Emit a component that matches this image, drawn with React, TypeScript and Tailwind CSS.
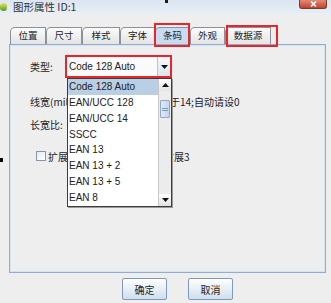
import React from 'react';

const tabs = [
  { label: '位置', w: 36 },
  { label: '尺寸', w: 36 },
  { label: '样式', w: 38 },
  { label: '字体', w: 35 },
  { label: '条码', w: 35, active: true },
  { label: '外观', w: 35 },
  { label: '数据源', w: 46 },
];

const items = ['Code 128 Auto', 'EAN/UCC 128', 'EAN/UCC 14', 'SSCC', 'EAN 13', 'EAN 13 + 2', 'EAN 13 + 5', 'EAN 8'];

const cjk = { fontFamily: '"Noto Sans CJK SC", "Liberation Sans", sans-serif' };
const latin = { fontFamily: '"Liberation Sans", Arial, sans-serif' };

const DownArrow = () => (
  <svg width="7" height="4" viewBox="0 0 7 4">
    <path d="M0 0h7L3.5 4z" fill="#111" />
  </svg>
);

const UpArrow = () => (
  <svg width="7" height="4" viewBox="0 0 7 4">
    <path d="M0 4h7L3.5 0z" fill="#111" />
  </svg>
);

export default function App() {
  return (
    <div className="relative w-[331px] h-[303px] overflow-hidden bg-[#eeeeee] text-[#222]" style={cjk}>
      {/* title bar */}
      <div className="flex items-center h-[14px] bg-gradient-to-b from-[#dbe6f2] to-[#e8eef5]">
        <div className="w-[7px] h-[8px] rounded-full bg-gradient-to-b from-[#e6e84a] to-[#4a9a2a]" />
        <span className="ml-[6px] text-[10.5px] leading-none text-[#333]">图形属性 ID:1</span>
        <div className="ml-auto mr-[4px] self-start flex items-center justify-center w-[28px] h-[9px] rounded-b-[3px] border border-t-0 border-[#7a3a30] bg-gradient-to-b from-[#e08a78] to-[#c2402a]">
          <svg width="7" height="6" viewBox="0 0 7 6">
            <path d="M1 0.5L6 5.5M6 0.5L1 5.5" stroke="white" strokeWidth="1.6" />
          </svg>
        </div>
      </div>

      {/* tabs */}
      <div className="flex items-end h-[17px] mt-[13px] pl-[10px]">
        {tabs.map((t) => (
          <div
            key={t.label}
            style={{ width: t.w }}
            className={`h-[17px] flex items-center justify-center border border-b-0 border-[#8c9098] rounded-tl-[5px] text-[9.5px] leading-none ${
              t.active ? 'bg-[#c7dcf0]' : 'bg-gradient-to-b from-[#fbfbfb] to-[#e4e4e4]'
            }`}
          >
            {t.label}
          </div>
        ))}
      </div>

      {/* panel */}
      <div className="ml-[9px] w-[317px] h-[229px] border border-[#8eaed6] shadow-[inset_0_0_0_1px_#d6e3f1] pl-[20px] pt-[10px]">
        <div className="flex items-center h-[23px]">
          <span className="w-[35px] text-[10px]">类型:</span>
          <div className="flex w-[107px] h-[23px] border-2 border-[#e8262a] bg-white">
            <div className="flex-1 flex items-center pl-[2px] text-[10px] bg-[#fafafa]" style={latin}>
              Code 128 Auto
            </div>
            <div className="w-[13px] flex items-center justify-center border-l border-[#b7c4d4] bg-gradient-to-b from-[#f6f9fc] to-[#dbe5ef]">
              <DownArrow />
            </div>
          </div>
        </div>

        <div className="flex items-center h-[14px] mt-[16px] text-[10px]">
          <span className="w-[130px]">线宽(mil):</span>
          <span>小于14;自动请设0</span>
        </div>

        <div className="flex items-center h-[14px] mt-[9px] text-[10px]">
          <span>长宽比:</span>
        </div>

        <div className="flex items-center h-[14px] mt-[18px] text-[10px]">
          <div className="ml-[6px] w-[10px] h-[10px] border border-[#8796a8] bg-gradient-to-br from-[#e6ebf0] to-white" />
          <span className="ml-[2px] w-[116px]">扩展</span>
          <span>扩展3</span>
        </div>
      </div>

      {/* buttons */}
      <div className="flex gap-[21px] pl-[122px] mt-[5px]">
        {['确定', '取消'].map((b) => (
          <div
            key={b}
            className="w-[45px] h-[22px] flex items-center justify-center border border-[#7d9aba] rounded-[2px] bg-gradient-to-b from-white to-[#cfdeed] text-[10px]"
          >
            {b}
          </div>
        ))}
      </div>

      {/* red highlight boxes on tabs */}
      <div className="absolute left-[154px] top-[23px] w-[36px] h-[24px] border-2 border-[#e8262a]" />
      <div className="absolute left-[226px] top-[25px] w-[52px] h-[22px] border-2 border-[#e8262a]" />

      {/* open dropdown list */}
      <div
        className="absolute left-[67px] top-[78px] w-[105px] h-[129px] flex bg-white border border-[#3c3c3c] shadow-[1px_1px_0_#9a9a9a]"
        style={latin}
      >
        <div className="flex-1 flex flex-col">
          {items.map((it, i) => (
            <div
              key={it}
              className={`h-[16px] flex items-center pl-[1px] text-[10px] leading-none ${i === 0 ? 'bg-[#b8cfe6]' : ''}`}
            >
              {it}
            </div>
          ))}
        </div>
        <div className="w-[13px] flex flex-col bg-[#ececec] border-l border-[#c8c8c8]">
          <div className="h-[12px] flex items-center justify-center bg-gradient-to-b from-white to-[#e2e2e2]">
            <UpArrow />
          </div>
          <div className="mt-[9px] mx-[1px] h-[18px] flex flex-col items-center justify-center gap-[1px] rounded-[1px] border border-[#8fa9c8] bg-gradient-to-r from-[#dfeaf6] to-[#c3d6ec]">
            <div className="w-[6px] h-[1px] bg-[#7f9ab9]" />
            <div className="w-[6px] h-[1px] bg-[#7f9ab9]" />
          </div>
          <div className="mt-auto h-[12px] flex items-center justify-center bg-gradient-to-b from-white to-[#e2e2e2]">
            <DownArrow />
          </div>
        </div>
      </div>

      {/* stray marks */}
      <div className="absolute left-[165px] top-0 w-[3px] h-[3px] bg-[#2a1a10]" />
      <div className="absolute left-0 top-[158px] w-[3px] h-[4px] bg-black" />
    </div>
  );
}
